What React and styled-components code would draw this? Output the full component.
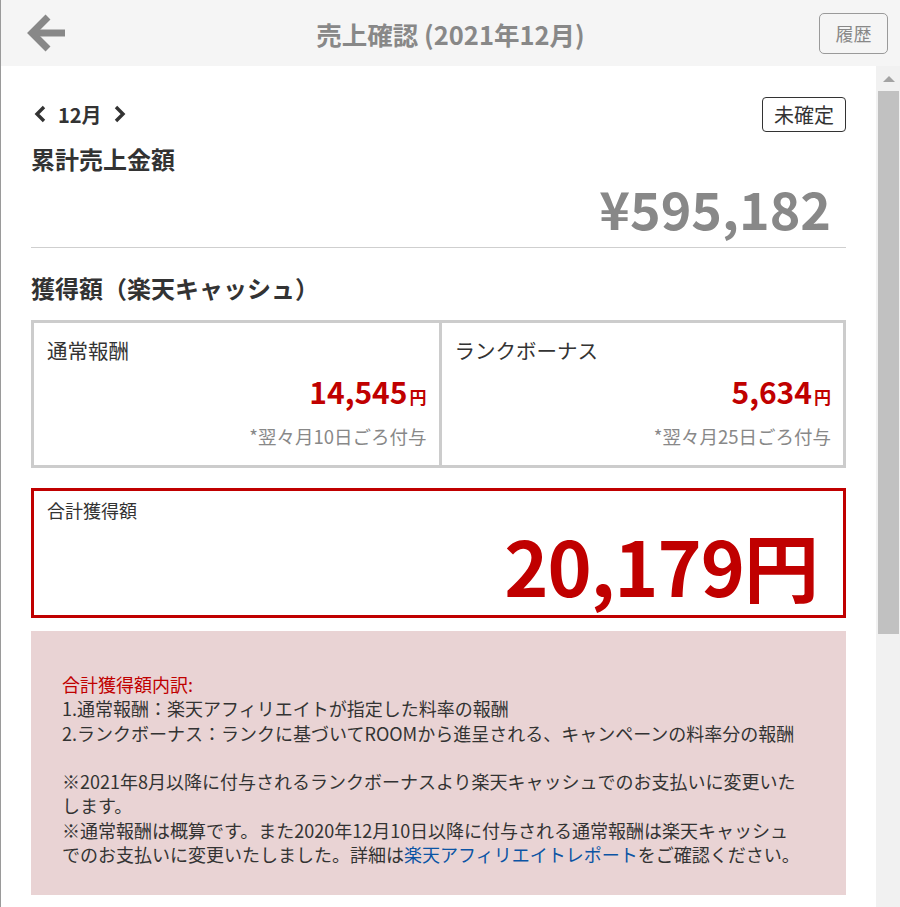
import React from "react";
import styled, { createGlobalStyle } from "styled-components";

const GlobalStyle = createGlobalStyle`
  html, body {
    margin: 0;
    height: 100%;
    overflow: hidden;
  }
  #root {
    height: 100%;
  }
  * {
    box-sizing: border-box;
  }
`;

const Page = styled.div`
  display: flex;
  flex-direction: column;
  height: 100vh;
  border-left: 1px solid #9a9a9a;
  font-family: "Noto Sans CJK JP", "Noto Sans", sans-serif;
  color: #333;
  background: #fff;
`;

const Header = styled.header`
  flex: none;
  height: 66px;
  display: grid;
  grid-template-columns: 1fr auto 1fr;
  align-items: center;
  background: #f5f5f5;
`;

const BackButton = styled.button`
  justify-self: start;
  margin-left: 26px;
  padding: 0;
  border: none;
  background: none;
  display: flex;
  cursor: pointer;
`;

const Title = styled.h1`
  margin: 0;
  font-size: 25.5px;
  font-weight: 700;
  color: #888;
`;

const HistoryButton = styled.button`
  justify-self: end;
  margin-right: 12px;
  width: 69px;
  height: 41px;
  border: 1px solid #9a9a9a;
  border-radius: 5px;
  background: transparent;
  font-family: inherit;
  font-size: 18px;
  color: #888;
  cursor: pointer;
`;

const Body = styled.div`
  flex: 1;
  min-height: 0;
  display: flex;
`;

const Scroll = styled.main`
  flex: 1;
  min-width: 0;
  overflow: hidden;
`;

/* scrollbar track beside the content */
const ScrollBar = styled.div`
  flex: none;
  width: 24px;
  display: flex;
  flex-direction: column;
  align-items: stretch;
  background: #f1f1f1;
`;

const ScrollUp = styled.div`
  height: 25px;
  display: flex;
  justify-content: center;
  padding-top: 10px;
  padding-left: 1px;
  &::before {
    content: "";
    width: 0;
    height: 0;
    border-left: 6px solid transparent;
    border-right: 6px solid transparent;
    border-bottom: 6px solid #a3a3a3;
  }
`;

const ScrollThumb = styled.div`
  height: 543px;
  margin: 0 1px 0 2px;
  background: #c1c1c1;
`;

const Content = styled.div`
  padding: 30px 30px 40px 30px;
`;

const MonthRow = styled.div`
  display: flex;
  align-items: center;
  justify-content: space-between;
  height: 36px;
`;

const MonthNav = styled.div`
  display: flex;
  align-items: center;
  gap: 11px;
  padding-left: 3px;
  font-size: 20px;
  font-weight: 700;
  color: #333;
`;

const Chevron = styled.svg`
  display: block;
  cursor: pointer;
`;

const StatusTag = styled.span`
  display: inline-flex;
  align-items: center;
  justify-content: center;
  width: 84px;
  height: 35px;
  border: 1px solid #333;
  border-radius: 4px;
  font-size: 20px;
  color: #333;
`;

const Heading = styled.h2`
  margin: ${(p) => p.$top || 0}px 0 0;
  font-size: 24px;
  line-height: 36px;
  font-weight: 700;
  color: #333;
`;

const SalesTotal = styled.div`
  text-align: right;
  padding-right: 15px;
  font-size: 52px;
  line-height: 62px;
  font-weight: 700;
  color: #888;
`;

const Divider = styled.hr`
  margin: 8px 0 0;
  border: none;
  border-top: 1px solid #cfcfcf;
`;

const CardGrid = styled.div`
  display: grid;
  grid-template-columns: 1fr 1fr;
  margin-top: 14px;
  border: 3px solid #cccccc;
`;

const Card = styled.div`
  display: flex;
  flex-direction: column;
  padding: 13px 12px 16px 13px;
  & + & {
    border-left: 3px solid #cccccc;
  }
`;

const CardTitle = styled.div`
  font-size: 20.5px;
  line-height: 28px;
  color: #333;
`;

const CardAmount = styled.div`
  margin-top: 12px;
  text-align: right;
  font-size: 30px;
  line-height: 30px;
  font-weight: 700;
  color: #c00000;
`;

const Yen = styled.span`
  margin-left: 2px;
  font-size: ${(p) => p.$size}px;
  line-height: 1;
`;

const CardNote = styled.div`
  margin-top: 17px;
  text-align: right;
  font-size: 18.5px;
  line-height: 26px;
  color: #888;
`;

const TotalBox = styled.section`
  margin-top: 20px;
  border: 3px solid #c00000;
  padding: 6px 25px 12px 13px;
`;

const TotalLabel = styled.div`
  font-size: 18px;
  line-height: 26px;
  color: #333;
`;

const TotalAmount = styled.div`
  margin-top: 4px;
  text-align: right;
  font-size: 75px;
  line-height: 76px;
  font-weight: 700;
  color: #c00000;
  letter-spacing: -1px;
`;

const Notice = styled.section`
  margin-top: 13px;
  background: #e9d3d4;
  padding: 41px 20px 29px 31px;
  font-size: 18px;
  line-height: 24.3px;
  color: #333;
`;

const NoticeTitle = styled.div`
  color: #c00000;
`;

const NoticeLine = styled.div`
  min-height: 24.3px;
`;

const Link = styled.a`
  color: #0b54a4;
  text-decoration: none;
`;

function BackArrow() {
  return (
    <svg width="40" height="38" viewBox="0 0 40 38">
      <path d="M21 3 L5 19 L21 35" fill="none" stroke="#888" strokeWidth="7" strokeLinejoin="miter" />
      <path d="M7 19 H38" fill="none" stroke="#888" strokeWidth="7" />
    </svg>
  );
}

function ChevronIcon({ dir }) {
  const d = dir === "left" ? "M10 2 L3 9 L10 16" : "M3 2 L10 9 L3 16";
  return (
    <Chevron width="13" height="18" viewBox="0 0 13 18">
      <path d={d} fill="none" stroke="#333" strokeWidth="3.4" strokeLinejoin="miter" />
    </Chevron>
  );
}

const rewards = [
  { title: "通常報酬", amount: "14,545", note: "*翌々月10日ごろ付与" },
  { title: "ランクボーナス", amount: "5,634", note: "*翌々月25日ごろ付与" },
];

export default function App() {
  return (
    <>
      <GlobalStyle />
      <Page>
        <Header>
          <BackButton aria-label="戻る">
            <BackArrow />
          </BackButton>
          <Title>売上確認 (2021年12月)</Title>
          <HistoryButton>履歴</HistoryButton>
        </Header>

        <Body>
          <Scroll>
            <Content>
              <MonthRow>
                <MonthNav>
                  <ChevronIcon dir="left" />
                  <span>12月</span>
                  <ChevronIcon dir="right" />
                </MonthNav>
                <StatusTag>未確定</StatusTag>
              </MonthRow>

              <Heading $top={9}>累計売上金額</Heading>
              <SalesTotal>¥595,182</SalesTotal>
              <Divider />

              <Heading $top={22}>獲得額（楽天キャッシュ）</Heading>

              <CardGrid>
                {rewards.map((r) => (
                  <Card key={r.title}>
                    <CardTitle>{r.title}</CardTitle>
                    <CardAmount>
                      {r.amount}
                      <Yen $size={17}>円</Yen>
                    </CardAmount>
                    <CardNote>{r.note}</CardNote>
                  </Card>
                ))}
              </CardGrid>

              <TotalBox>
                <TotalLabel>合計獲得額</TotalLabel>
                <TotalAmount>20,179円</TotalAmount>
              </TotalBox>

              <Notice>
                <NoticeTitle>合計獲得額内訳:</NoticeTitle>
                <NoticeLine>1.通常報酬：楽天アフィリエイトが指定した料率の報酬</NoticeLine>
                <NoticeLine>2.ランクボーナス：ランクに基づいてROOMから進呈される、キャンペーンの料率分の報酬</NoticeLine>
                <NoticeLine />
                <NoticeLine>
                  ※2021年8月以降に付与されるランクボーナスより楽天キャッシュでのお支払いに変更いた<br />します。
                </NoticeLine>
                <NoticeLine>
                  ※通常報酬は概算です。また2020年12月10日以降に付与される通常報酬は楽天キャッシュ<br />でのお支払いに変更いたしました。詳細は
                  <Link href="#">楽天アフィリエイトレポート</Link>をご確認ください。
                </NoticeLine>
              </Notice>
            </Content>
          </Scroll>

          <ScrollBar aria-hidden="true">
            <ScrollUp />
            <ScrollThumb />
          </ScrollBar>
        </Body>
      </Page>
    </>
  );
}
